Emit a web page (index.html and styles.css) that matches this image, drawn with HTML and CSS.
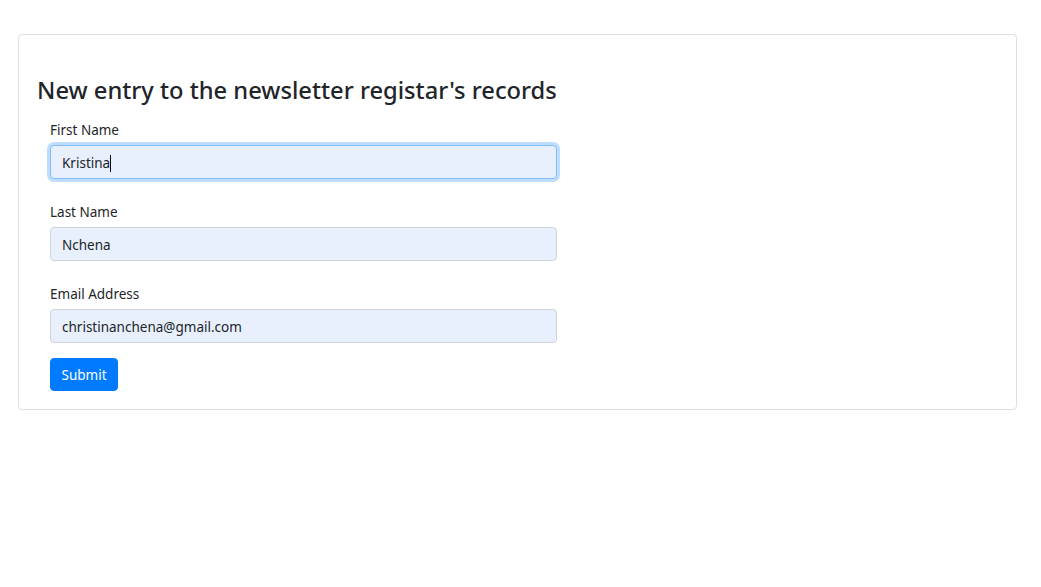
FILE: index.html
```html
<!DOCTYPE html>
<html lang="en">
<head>
<meta charset="utf-8">
<title>Newsletter</title>
<link rel="stylesheet" href="styles.css">
</head>
<body>
<div class="container">
  <div class="card">
    <h3 class="title">New entry to the newsletter registar's records</h3>
    <form class="form">
      <div class="group">
        <label class="label">First Name</label>
        <div class="field focused">Kristina<span class="caret"></span></div>
      </div>
      <div class="group">
        <label class="label">Last Name</label>
        <div class="field">Nchena</div>
      </div>
      <div class="group last">
        <label class="label">Email Address</label>
        <div class="field">christinanchena@gmail.com</div>
      </div>
      <button type="button" class="btn">Submit</button>
    </form>
  </div>
</div>
</body>
</html>
```
FILE: styles.css
```css
* { box-sizing: border-box; }
html, body { margin: 0; padding: 0; background: #fff; }
body {
  font-family: "Noto Sans", "Open Sans", sans-serif;
  font-size: 13.5px;
  color: #212529;
}
.container { padding: 34px 24px 0 18px; }
.card {
  border: 1px solid rgba(0,0,0,.125);
  border-radius: 4px;
  padding: 41px 18px 18px 18px;
}
.title {
  margin: 0 0 16px 0;
  font-size: 23.7px;
  font-weight: 500;
  line-height: 1.2;
}
.form { width: 507px; margin-left: 13px; }
.group { margin-bottom: 23px; }
.group.last { margin-bottom: 15px; }
.label { display: block; line-height: 21px; margin-bottom: 4px; }
.field {
  height: 34px;
  border: 1px solid #ced4da;
  border-radius: 4px;
  background: #e8f0fe;
  padding: 1px 11px 0;
  line-height: 32px;
  color: #212529;
}
.field.focused {
  border-color: #80bdff;
  box-shadow: 0 0 0 3px rgba(0,123,255,.25);
}
.caret {
  display: inline-block;
  width: 1px;
  height: 17px;
  background: #000;
  vertical-align: -4px;
}
.btn {
  display: block;
  height: 33px;
  width: 68px;
  padding: 0;
  border: 1px solid #007bff;
  border-radius: 4px;
  background: #007bff;
  color: #fff;
  font: inherit;
}
```
